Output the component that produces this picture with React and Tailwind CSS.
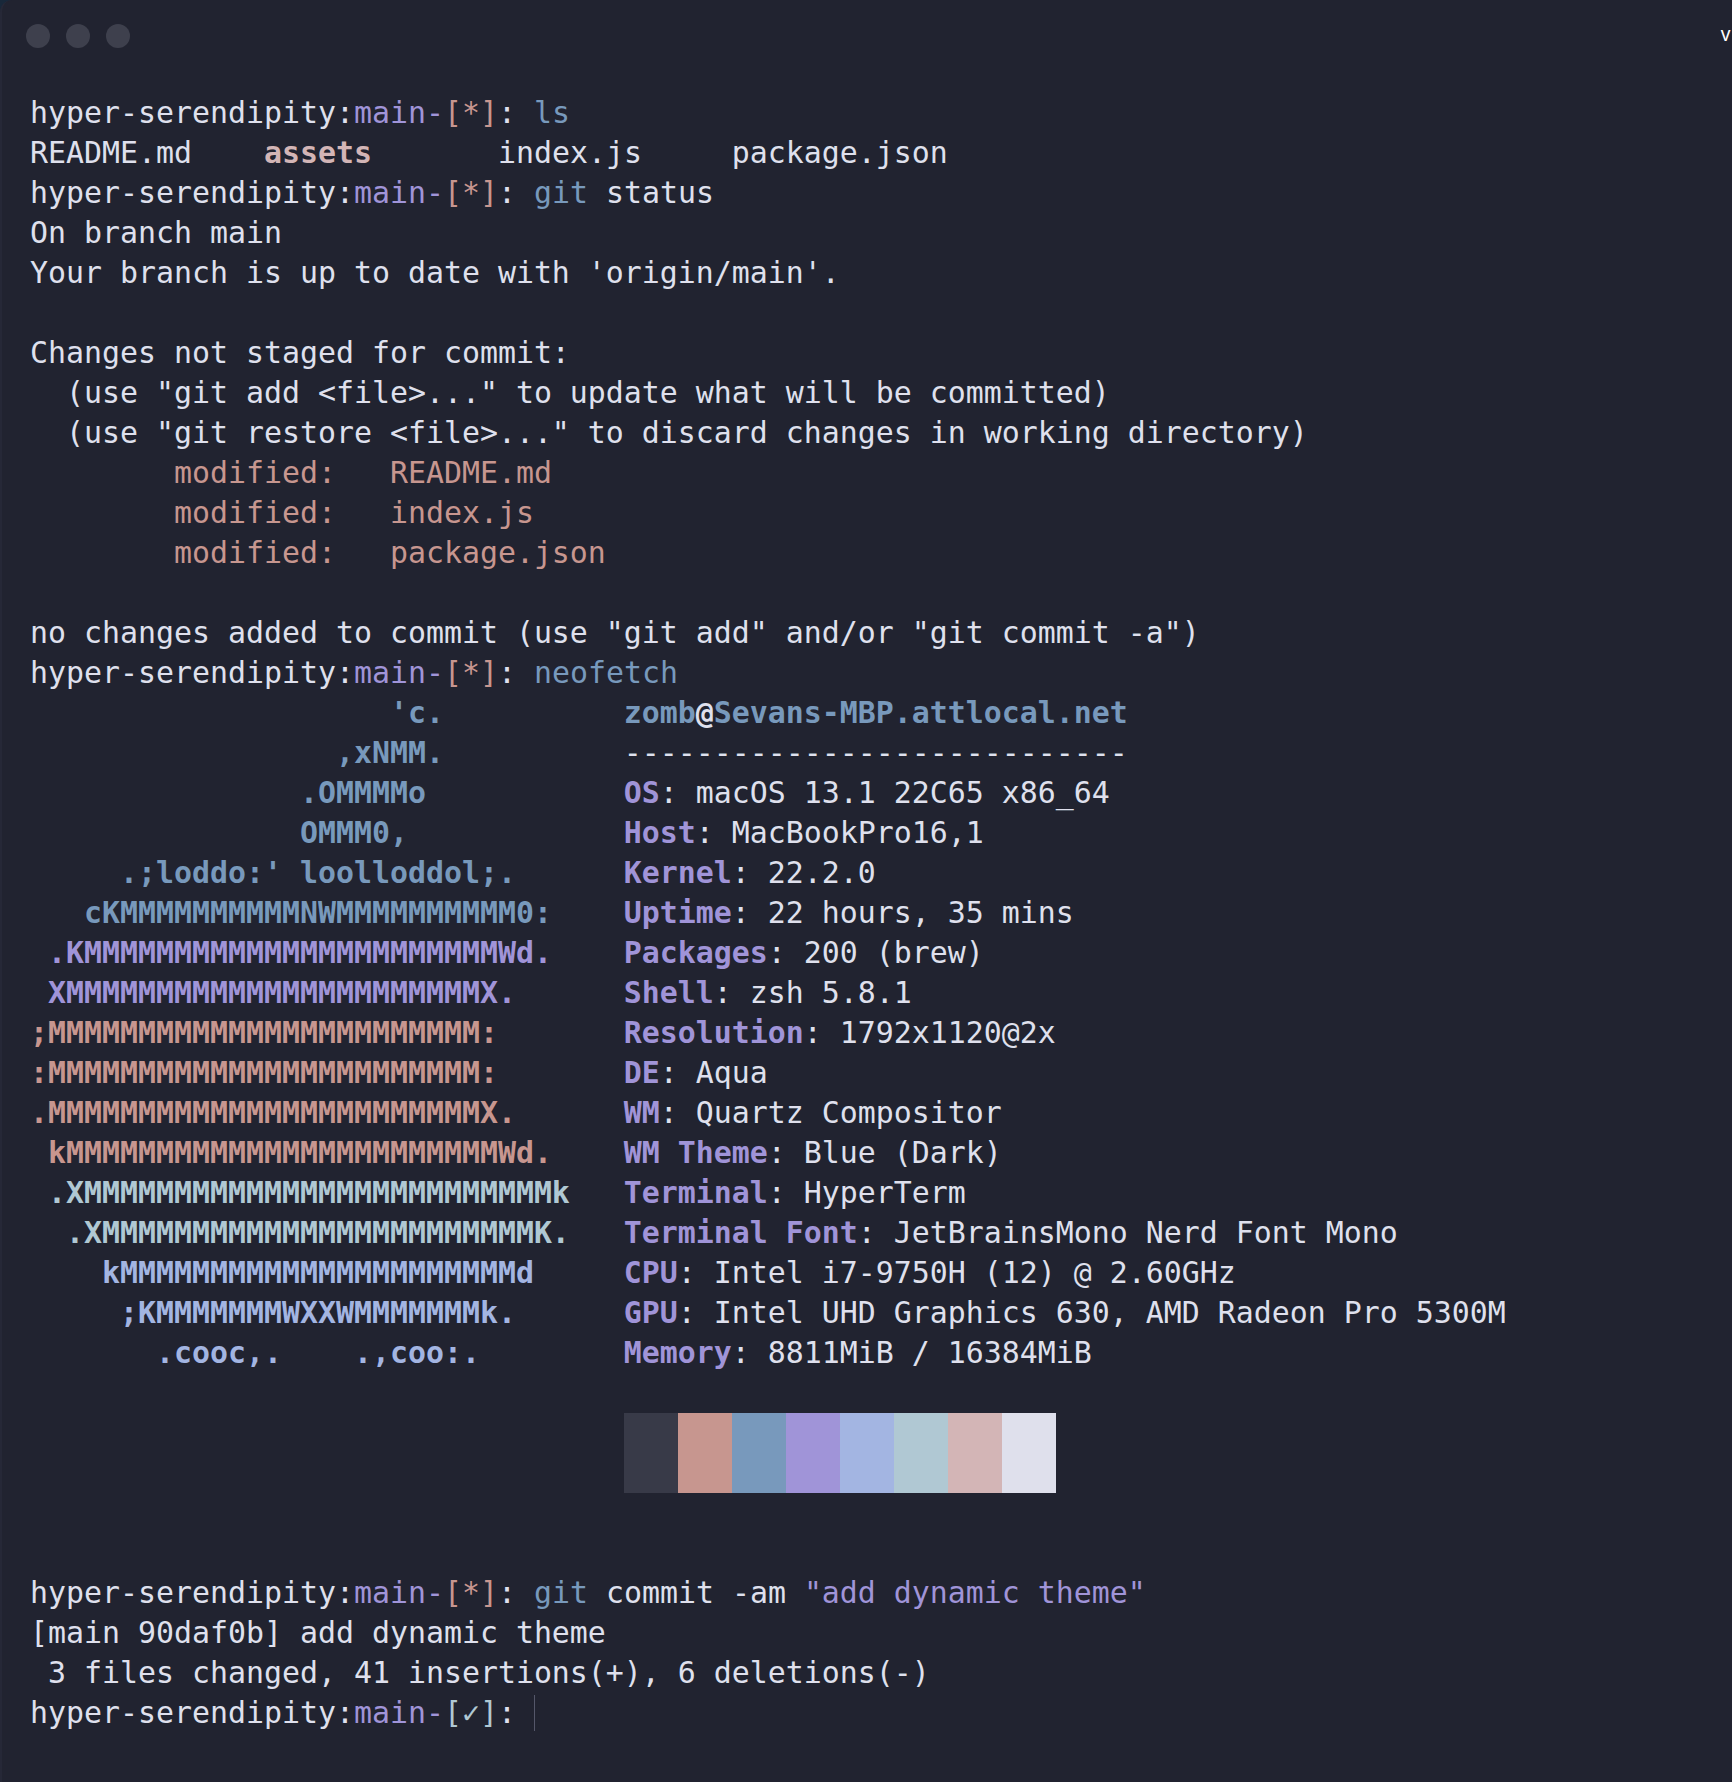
import React from 'react';

const fg = 'text-[#dfe0ed]';
const purple = 'text-[#a094d8]';
const salmon = 'text-[#c7968f]';
const blue = 'text-[#7899bc]';
const pink = 'text-[#d3b5b6]';
const teal = 'text-[#b0c8d3]';
const peri = 'text-[#a3b5e2]';

const prompt = (mark = '*', markCls = salmon) => [
  ['hyper-serendipity:', fg],
  ['main-', purple],
  [`[${mark}]`, markCls],
  [': ', fg],
];

const M = (n) => 'M'.repeat(n);

const logo = [
  ["                    'c.", blue],
  ['                 ,xNMM.', blue],
  ['               .OMMMMo', blue],
  ['               OMMM0,', blue],
  ["     .;loddo:' loolloddol;.", blue],
  ['   cK' + M(10) + 'NW' + M(10) + '0:', blue],
  [' .K' + M(23) + 'Wd.', purple],
  [' X' + M(23) + 'X.', purple],
  [';' + M(24) + ':', salmon],
  [':' + M(24) + ':', salmon],
  ['.' + M(24) + 'X.', salmon],
  [' k' + M(24) + 'Wd.', salmon],
  [' .X' + M(26) + 'k', teal],
  ['  .X' + M(24) + 'K.', teal],
  ['    k' + M(22) + 'd', peri],
  ['     ;K' + M(7) + 'WXXW' + M(7) + 'k.', peri],
  ['       .cooc,.    .,coo:.', peri],
];

const kv = (k, v) => [
  [k, `${purple} font-bold`],
  [': ', fg],
  [v, fg],
];

const info = [
  [
    ['zomb', `${blue} font-bold`],
    ['@', `${fg} font-bold`],
    ['Sevans-MBP.attlocal.net', `${blue} font-bold`],
  ],
  [['-'.repeat(28), fg]],
  kv('OS', 'macOS 13.1 22C65 x86_64'),
  kv('Host', 'MacBookPro16,1'),
  kv('Kernel', '22.2.0'),
  kv('Uptime', '22 hours, 35 mins'),
  kv('Packages', '200 (brew)'),
  kv('Shell', 'zsh 5.8.1'),
  kv('Resolution', '1792x1120@2x'),
  kv('DE', 'Aqua'),
  kv('WM', 'Quartz Compositor'),
  kv('WM Theme', 'Blue (Dark)'),
  kv('Terminal', 'HyperTerm'),
  kv('Terminal Font', 'JetBrainsMono Nerd Font Mono'),
  kv('CPU', 'Intel i7-9750H (12) @ 2.60GHz'),
  kv('GPU', 'Intel UHD Graphics 630, AMD Radeon Pro 5300M'),
  kv('Memory', '8811MiB / 16384MiB'),
];

const neofetch = logo.map(([art, cls], i) => [
  [art.padEnd(33), `${cls} font-bold`],
  ...info[i],
]);

const before = [
  [...prompt(), ['ls', blue]],
  [
    ['README.md    ', fg],
    ['assets', `${pink} font-bold`],
    ['       index.js     package.json', fg],
  ],
  [...prompt(), ['git', blue], [' status', fg]],
  [['On branch main', fg]],
  [["Your branch is up to date with 'origin/main'.", fg]],
  [],
  [['Changes not staged for commit:', fg]],
  [['  (use "git add <file>..." to update what will be committed)', fg]],
  [['  (use "git restore <file>..." to discard changes in working directory)', fg]],
  [['        modified:   README.md', salmon]],
  [['        modified:   index.js', salmon]],
  [['        modified:   package.json', salmon]],
  [],
  [['no changes added to commit (use "git add" and/or "git commit -a")', fg]],
  [...prompt(), ['neofetch', blue]],
  ...neofetch,
  [],
];

const after = [
  [],
  [],
  [...prompt(), ['git', blue], [' commit -am ', fg], ['"add dynamic theme"', purple]],
  [['[main 90daf0b] add dynamic theme', fg]],
  [[' 3 files changed, 41 insertions(+), 6 deletions(-)', fg]],
];

const swatches = ['#383a48', '#c7968f', '#7899bc', '#a094d8', '#a3b5e2', '#b0c8d3', '#d3b5b6', '#dfe0ec'];

function Line({ segs }) {
  return (
    <div className="h-[40px] leading-[40px] whitespace-pre">
      {segs.map(([t, cls], i) => (
        <span key={i} className={cls}>{t}</span>
      ))}
    </div>
  );
}

export default function App() {
  return (
    <div className="w-[1732px] h-[1782px] bg-[#18283a] overflow-hidden">
      <div className="h-full bg-[#212330] rounded-tl-[12px] border-l-2 border-[#262837] flex flex-col">
        <div className="h-[70px] flex items-start pt-[24px] pl-[24px] gap-[16px]">
          <div className="w-[24px] h-[24px] rounded-full bg-[#3e404d]" />
          <div className="w-[24px] h-[24px] rounded-full bg-[#3e404d]" />
          <div className="w-[24px] h-[24px] rounded-full bg-[#3e404d]" />
          <div className="ml-auto mr-[1px] text-[19px] leading-[22px] text-white font-['Inter',sans-serif]">v</div>
        </div>
        <div className="pt-[23px] pl-[28px] font-['DejaVu_Sans_Mono','Liberation_Mono',monospace] text-[29.9px] text-[#dfe0ed]">
          {before.map((segs, i) => (
            <Line key={i} segs={segs} />
          ))}
          <div className="flex ml-[594px]">
            {swatches.map((c) => (
              <div key={c} className="w-[54px] h-[80px]" style={{ backgroundColor: c }} />
            ))}
          </div>
          {after.map((segs, i) => (
            <Line key={i} segs={segs} />
          ))}
          <div className="h-[40px] flex items-center whitespace-pre">
            <span className={fg}>hyper-serendipity:</span>
            <span className={purple}>main-</span>
            <span className={teal}>[✓]</span>
            <span className={fg}>: </span>
            <span className="w-[1px] h-[36px] bg-[#55576a]" />
          </div>
        </div>
      </div>
    </div>
  );
}
